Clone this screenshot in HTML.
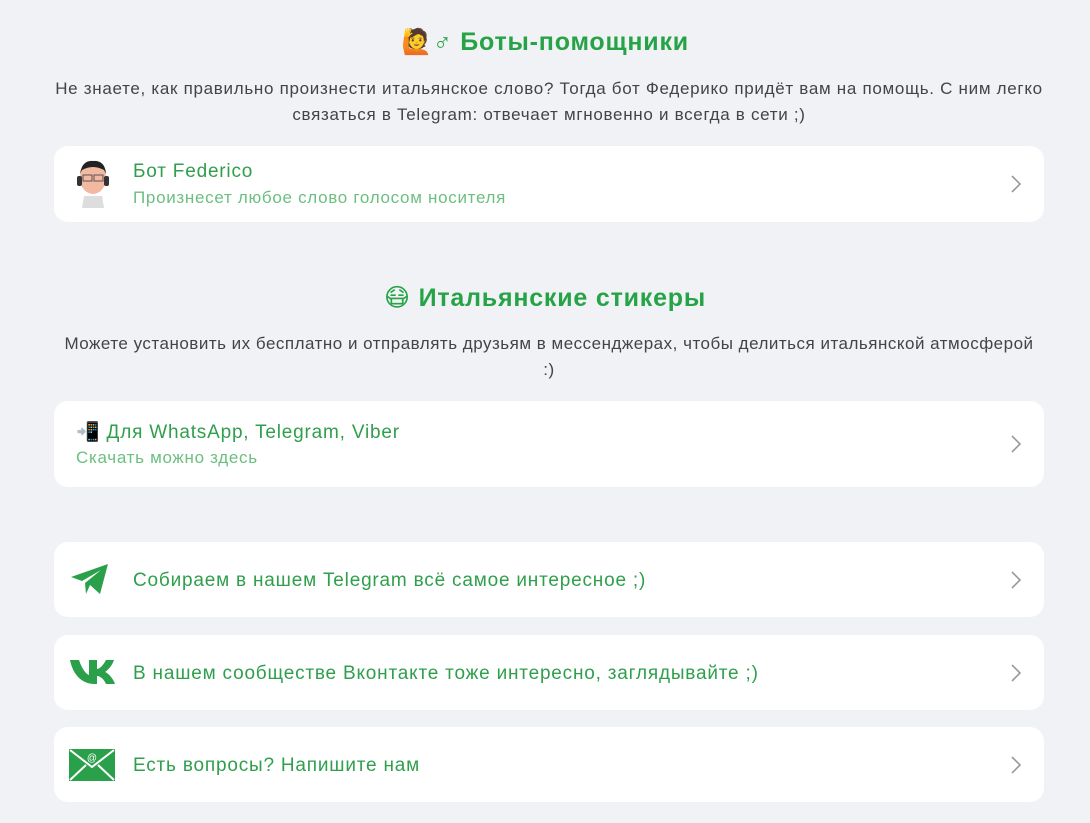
<!DOCTYPE html>
<html><head><meta charset="utf-8"><style>
body{margin:0;background:#f0f2f5;font-family:"Liberation Sans","DejaVu Sans",sans-serif;width:1090px;height:823px;overflow:hidden;position:relative}
.t{position:absolute;left:0;width:1090px;text-align:center;color:#27a347;font-weight:bold;font-size:25px;letter-spacing:0.8px}
.p{position:absolute;left:54px;width:990px;text-align:center;color:#444;font-size:17px;line-height:26px;letter-spacing:0.7px}
.c{position:absolute;left:54px;width:990px;background:#fff;border-radius:14px}
.c .a{position:absolute;left:79px;color:#2f9f4c;font-size:19px;letter-spacing:0.8px;white-space:nowrap}
.c .s{position:absolute;color:#6cbf80;font-size:17px;letter-spacing:0.7px;white-space:nowrap}
.ch{position:absolute;right:22px;top:50%;margin-top:-9px}
</style></head><body>
<div class="t" style="top:28px">🙋♂ Боты-помощники</div>
<div class="p" style="top:76px">Не знаете, как правильно произнести итальянское слово? Тогда бот Федерико придёт вам на помощь. С ним легко связаться в Telegram: отвечает мгновенно и всегда в сети ;)</div>
<div class="c" style="top:146px;height:76px">
<svg style="position:absolute;left:20px;top:12px" width="38" height="52" viewBox="0 0 38 52"><ellipse cx="19" cy="20" rx="13" ry="16" fill="#f2b9a0"/><path d="M6 16 Q8 2 19 3 Q31 2 32 16 L30 12 Q19 6 8 12Z" fill="#222"/><rect x="9" y="17" width="9" height="6" fill="none" stroke="#555"/><rect x="20" y="17" width="9" height="6" fill="none" stroke="#555"/><rect x="3" y="18" width="5" height="10" rx="2" fill="#333"/><rect x="30" y="18" width="5" height="10" rx="2" fill="#333"/><path d="M10 38 L28 38 L30 50 L8 50Z" fill="#ddd"/></svg>
<div class="a" style="top:15px">Бот Federico</div>
<div class="s" style="left:79px;top:42px">Произнесет любое слово голосом носителя</div>
<svg class="ch" width="12" height="18" viewBox="0 0 12 18"><path d="M2 1l8 8-8 8" fill="none" stroke="#999" stroke-width="1.6"/></svg></div>
<div class="t" style="top:283px">😷 Итальянские стикеры</div>
<div class="p" style="top:331px;letter-spacing:0.5px;white-space:nowrap">Можете установить их бесплатно и отправлять друзьям в мессенджерах, чтобы делиться итальянской атмосферой<br>:)</div>
<div class="c" style="top:401px;height:86px">
<div class="a" style="left:22px;top:19px">📲 Для WhatsApp, Telegram, Viber</div>
<div class="s" style="left:22px;top:47px">Скачать можно здесь</div>
<svg class="ch" width="12" height="18" viewBox="0 0 12 18"><path d="M2 1l8 8-8 8" fill="none" stroke="#999" stroke-width="1.6"/></svg></div>
<div class="c" style="top:542px;height:75px">
<svg style="position:absolute;left:16px;top:21px" width="40" height="32" viewBox="0 0 40 32"><path d="M1 14 L38 1 L30 31 L20 22 L16 31 L15 20 L31 7 L12 18Z" fill="#2aa04a"/></svg>
<div class="a" style="top:28px">Собираем в нашем Telegram всё самое интересное ;)</div>
<svg class="ch" width="12" height="18" viewBox="0 0 12 18"><path d="M2 1l8 8-8 8" fill="none" stroke="#999" stroke-width="1.6"/></svg></div>
<div class="c" style="top:635px;height:75px">
<svg style="position:absolute;left:16px;top:23px" width="46" height="28" viewBox="0 0 46 28"><path d="M0 2h9c3 9 7 14 10 15V2h8v9c3 0 7-5 9-9h8c-2 6-6 10-9 12 3 1 8 6 10 12h-9c-2-5-6-8-9-8v8h-2C12 26 3 17 0 2z" fill="#2aa04a"/></svg>
<div class="a" style="top:28px">В нашем сообществе Вконтакте тоже интересно, заглядывайте ;)</div>
<svg class="ch" width="12" height="18" viewBox="0 0 12 18"><path d="M2 1l8 8-8 8" fill="none" stroke="#999" stroke-width="1.6"/></svg></div>
<div class="c" style="top:727px;height:75px">
<svg style="position:absolute;left:15px;top:22px" width="46" height="32" viewBox="0 0 46 32"><rect width="46" height="32" fill="#2aa04a"/><path d="M1 1l22 17L45 1M1 31l16-15M45 31L29 16" fill="none" stroke="#fff" stroke-width="2"/><text x="23" y="12" font-size="10" fill="#fff" text-anchor="middle" font-family="Liberation Sans">@</text></svg>
<div class="a" style="top:28px">Есть вопросы? Напишите нам</div>
<svg class="ch" width="12" height="18" viewBox="0 0 12 18"><path d="M2 1l8 8-8 8" fill="none" stroke="#999" stroke-width="1.6"/></svg></div>
</body></html>
